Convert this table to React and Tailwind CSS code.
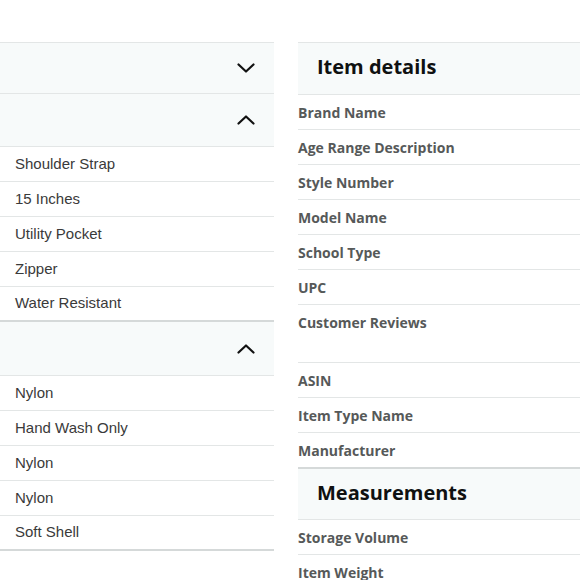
import React from 'react';

const features = ['Shoulder Strap', '15 Inches', 'Utility Pocket', 'Zipper', 'Water Resistant'];
const materials = ['Nylon', 'Hand Wash Only', 'Nylon', 'Nylon', 'Soft Shell'];

function Chevron({ up }) {
  return (
    <svg width="18" height="10" viewBox="0 0 18 10" fill="none" className="mr-[19px]">
      <polyline
        points={up ? '1.5,8.5 9,1.5 16.5,8.5' : '1.5,1.5 9,8.5 16.5,1.5'}
        stroke="#111"
        strokeWidth="2.2"
        strokeLinecap="round"
        strokeLinejoin="round"
      />
    </svg>
  );
}

function LeftRows({ items }) {
  return items.map((t, i) => (
    <div
      key={i}
      className={`h-[35px] flex items-center pl-[15px] text-[15px] text-[#3a3a3a] ${
        i === items.length - 1 ? 'border-b-2 border-[#d5d9d9]' : 'border-b border-[#e3e6e6]'
      }`}
    >
      {t}
    </div>
  ));
}

function Label({ children, h = 'h-[35px]', border = true }) {
  return (
    <div className={`${h} ${border ? 'border-b border-[#e3e6e6]' : ''}`}>
      <div className="h-[34px] flex items-center text-[14px] font-bold text-[#565959]">{children}</div>
    </div>
  );
}

export default function App() {
  return (
    <div className="w-[580px] h-[580px] overflow-hidden bg-white flex gap-[24px] pt-[42px]">
      {/* left column: collapsible sections */}
      <div className="w-[274px] shrink-0" style={{ fontFamily: '"Liberation Sans", Arial, sans-serif' }}>
        <div className="h-[52px] bg-[#f7fafa] border-y border-[#e3e6e6] flex items-center justify-end">
          <Chevron />
        </div>
        <div className="h-[53px] bg-[#f7fafa] border-b border-[#e3e6e6] flex items-center justify-end">
          <Chevron up />
        </div>
        <LeftRows items={features} />
        <div className="h-[54px] bg-[#f7fafa] border-b border-[#e3e6e6] flex items-center justify-end">
          <Chevron up />
        </div>
        <LeftRows items={materials} />
      </div>

      {/* right column: item details table */}
      <div className="flex-1 min-w-0" style={{ fontFamily: '"Open Sans", "Noto Sans", sans-serif' }}>
        <div className="h-[53px] bg-[#f7fafa] border-y border-[#e3e6e6] flex items-center pl-[19px] pb-[3px]">
          <h2 className="text-[20px] font-bold text-[#0f1111]">Item details</h2>
        </div>
        <Label>Brand Name</Label>
        <Label>Age Range Description</Label>
        <Label>Style Number</Label>
        <Label>Model Name</Label>
        <Label>School Type</Label>
        <Label>UPC</Label>
        <Label h="h-[58px]">Customer Reviews</Label>
        <Label>ASIN</Label>
        <Label>Item Type Name</Label>
        <Label h="h-[34px]" border={false}>Manufacturer</Label>
        <div className="h-[53px] bg-[#f7fafa] border-t-2 border-b border-t-[#d5d9d9] border-b-[#e3e6e6] flex items-center pl-[19px] pb-[2px]">
          <h2 className="text-[20px] font-bold text-[#0f1111]">Measurements</h2>
        </div>
        <Label>Storage Volume</Label>
        <Label>Item Weight</Label>
      </div>
    </div>
  );
}
